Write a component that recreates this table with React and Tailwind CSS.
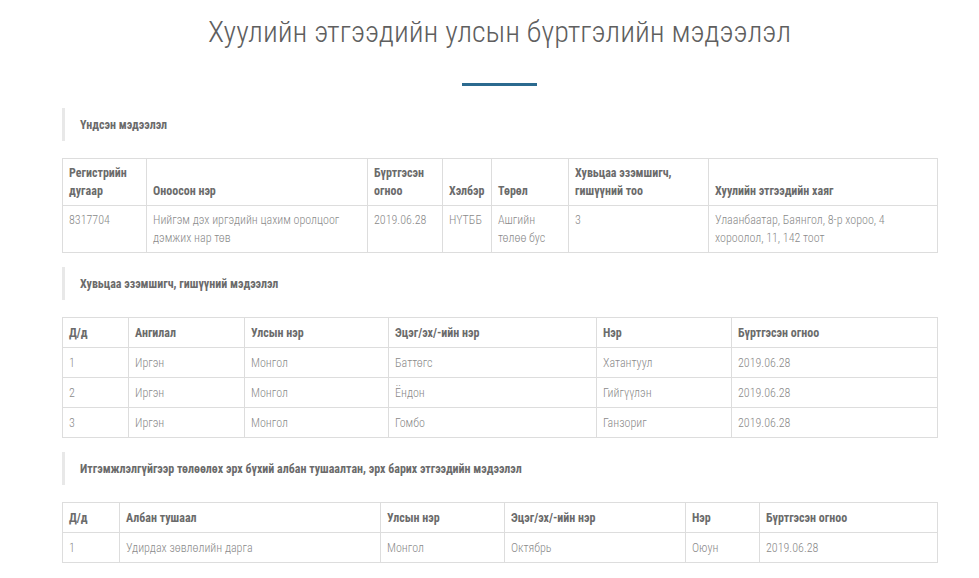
import React from "react";

const font = { fontFamily: "'Roboto Condensed', Roboto, 'Liberation Sans', sans-serif" };

function Heading({ children }) {
  return (
    <div className="border-l-[3px] border-[#e8e8e8] h-[33px] flex items-center pl-[15px] mb-[17px]">
      <span className="text-[12px] font-bold text-[#6b6b6b]">{children}</span>
    </div>
  );
}

function Table({ widths, head, rows, tall, mb }) {
  const lead = tall ? "leading-[17.5px]" : "leading-[18px]";
  return (
    <table className={`w-full border-collapse table-fixed ${mb}`}>
      <colgroup>
        {widths.map((w, i) => (
          <col key={i} style={{ width: w }} />
        ))}
      </colgroup>
      <thead>
        <tr>
          {head.map((h, i) => (
            <th
              key={i}
              className={`border border-[#dddddd] px-[6px] pt-[6px] pb-[5px] text-left align-bottom text-[12px] ${lead} font-bold text-[#6b6b6b]`}
            >
              {h}
            </th>
          ))}
        </tr>
      </thead>
      <tbody>
        {rows.map((r, ri) => (
          <tr key={ri}>
            {r.map((c, ci) => (
              <td
                key={ci}
                className={`border border-[#dddddd] px-[6px] pt-[6px] pb-[5px] text-left align-top text-[12px] ${lead} font-light text-[#8a8a8a]`}
              >
                {c}
              </td>
            ))}
          </tr>
        ))}
      </tbody>
    </table>
  );
}

export default function App() {
  return (
    <div className="bg-white min-h-[578px]" style={font}>
      <div className="ml-[62px] w-[875px]">
        <h1 className="text-center text-[30px] font-light text-[#5f5f5f] leading-[36px] pt-[14px]">
          Хуулийн этгээдийн улсын бүртгэлийн мэдээлэл
        </h1>
        <div className="mx-auto mt-[33px] mb-[22px] w-[75px] h-[3px] bg-[#2b6a8f]" />
        <Heading>Үндсэн мэдээлэл</Heading>
        <Table
          tall
          mb="mb-[14px]"
          widths={["84px", "221px", "75px", "49px", "77px", "140px", "229px"]}
          head={[
            "Регистрийн дугаар",
            "Оноосон нэр",
            "Бүртгэсэн огноо",
            "Хэлбэр",
            "Төрөл",
            "Хувьцаа эзэмшигч, гишүүний тоо",
            "Хуулийн этгээдийн хаяг",
          ]}
          rows={[
            [
              "8317704",
              "Нийгэм дэх иргэдийн цахим оролцоог дэмжих нар төв",
              "2019.06.28",
              "НҮТББ",
              "Ашгийн төлөө бус",
              "3",
              "Улаанбаатар, Баянгол, 8-р хороо, 4 хороолол, 11, 142 тоот",
            ],
          ]}
        />
        <Heading>Хувьцаа эзэмшигч, гишүүний мэдээлэл</Heading>
        <Table
          mb="mb-[14px]"
          widths={["66px", "116px", "144px", "208px", "135px", "206px"]}
          head={["Д/д", "Ангилал", "Улсын нэр", "Эцэг/эх/-ийн нэр", "Нэр", "Бүртгэсэн огноо"]}
          rows={[
            ["1", "Иргэн", "Монгол", "Баттөгс", "Хатантуул", "2019.06.28"],
            ["2", "Иргэн", "Монгол", "Ёндон", "Гийгүүлэн", "2019.06.28"],
            ["3", "Иргэн", "Монгол", "Гомбо", "Ганзориг", "2019.06.28"],
          ]}
        />
        <Heading>Итгэмжлэлгүйгээр төлөөлөх эрх бүхий албан тушаалтан, эрх барих этгээдийн мэдээлэл</Heading>
        <Table
          mb="mb-[14px]"
          widths={["57px", "261px", "124px", "181px", "74px", "178px"]}
          head={["Д/д", "Албан тушаал", "Улсын нэр", "Эцэг/эх/-ийн нэр", "Нэр", "Бүртгэсэн огноо"]}
          rows={[["1", "Удирдах зөвлөлийн дарга", "Монгол", "Октябрь", "Оюун", "2019.06.28"]]}
        />
      </div>
    </div>
  );
}
